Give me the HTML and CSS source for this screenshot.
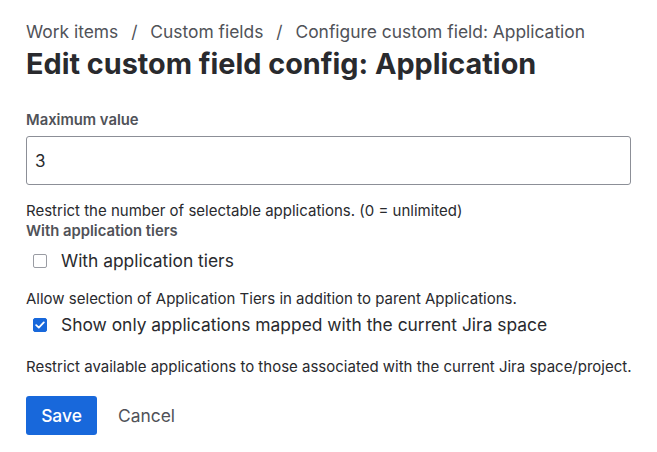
FILE: index.html
```html
<!DOCTYPE html>
<html lang="en">
<head>
    <meta charset="UTF-8">
    <title>Edit custom field config: Application</title>
    <link rel="stylesheet" href="styles.css">
</head>
<body>
    <div class="page">
        <nav class="crumbs">
            <a href="#">Work items</a>
            <span class="sep">/</span>
            <a href="#">Custom fields</a>
            <span class="sep">/</span>
            <a href="#">Configure custom field: Application</a>
        </nav>
        <h1>Edit custom field config: Application</h1>

        <form class="config">
            <label class="field-label" for="maxval">Maximum value</label>
            <input type="text" id="maxval" class="text-input" value="3">
            <p class="help">Restrict the number of selectable applications. (0 = unlimited)</p>

            <div class="field-label tight">With application tiers</div>
            <label class="check">
                <span class="box"></span>
                With application tiers
            </label>
            <p class="help">Allow selection of Application Tiers in addition to parent Applications.</p>

            <label class="check close">
                <span class="box checked">
                    <svg width="10" height="8" viewBox="0 0 10 8"><path d="M1.2 4.2 L3.8 6.6 L8.8 1.4" fill="none" stroke="#fff" stroke-width="1.8" stroke-linecap="round" stroke-linejoin="round"/></svg>
                </span>
                Show only applications mapped with the current Jira space
            </label>
            <p class="help wide">Restrict available applications to those associated with the current Jira space/project.</p>

            <div class="actions">
                <button type="button" class="btn primary">Save</button>
                <button type="button" class="btn subtle">Cancel</button>
            </div>
        </form>
    </div>
</body>
</html>
```

FILE: styles.css
```css
body {
    margin: 0;
    background-color: #fff;
    font-family: Inter, "Noto Sans", sans-serif;
    color: #292a2e;
}

.page {
    padding: 20px 26px;
}

.crumbs {
    font-size: 17.4px;
    line-height: 24px;
    color: #505258;
}

.crumbs a {
    color: #505258;
    text-decoration: none;
}

.crumbs .sep {
    margin: 0 8px;
}

h1 {
    margin: 2px 0 0;
    font-size: 28.8px;
    line-height: 36px;
    font-weight: 700;
    color: #292a2e;
}

.config {
    margin-top: 28px;
}

.field-label {
    display: block;
    font-size: 14.8px;
    line-height: 20px;
    font-weight: 600;
    color: #505258;
    margin-bottom: 6px;
}

.field-label.tight {
    margin-bottom: 0;
}

.text-input {
    display: block;
    box-sizing: border-box;
    width: 605px;
    height: 49px;
    padding: 0 8px;
    border: 1px solid #8c8f97;
    border-radius: 3px;
    font-family: inherit;
    font-size: 17px;
    color: #292a2e;
}

.help {
    margin: 16px 0 0;
    font-size: 15px;
    line-height: 20px;
    color: #292a2e;
    white-space: nowrap;
}

.help.wide {
    margin-top: 20px;
}

.check {
    display: flex;
    align-items: center;
    gap: 14px;
    padding-left: 7px;
    margin-top: 8px;
    font-size: 17.4px;
    line-height: 24px;
    color: #292a2e;
}

.check.close {
    margin-top: 4px;
}

.box {
    box-sizing: border-box;
    width: 14px;
    height: 14px;
    border: 1px solid #9a9ca3;
    border-radius: 2px;
    display: flex;
    align-items: center;
    justify-content: center;
}

.box.checked {
    background-color: #1868db;
    border-color: #1868db;
}

.actions {
    display: flex;
    gap: 8px;
    margin-top: 19px;
}

.btn {
    height: 39px;
    padding: 0 13px;
    border: none;
    border-radius: 3px;
    font-family: inherit;
    font-size: 17.4px;
    font-weight: 500;
    cursor: pointer;
}

.btn.primary {
    width: 71px;
    background-color: #1868db;
    color: #fff;
}

.btn.subtle {
    background: none;
    color: #505258;
    font-weight: 400;
}
```
